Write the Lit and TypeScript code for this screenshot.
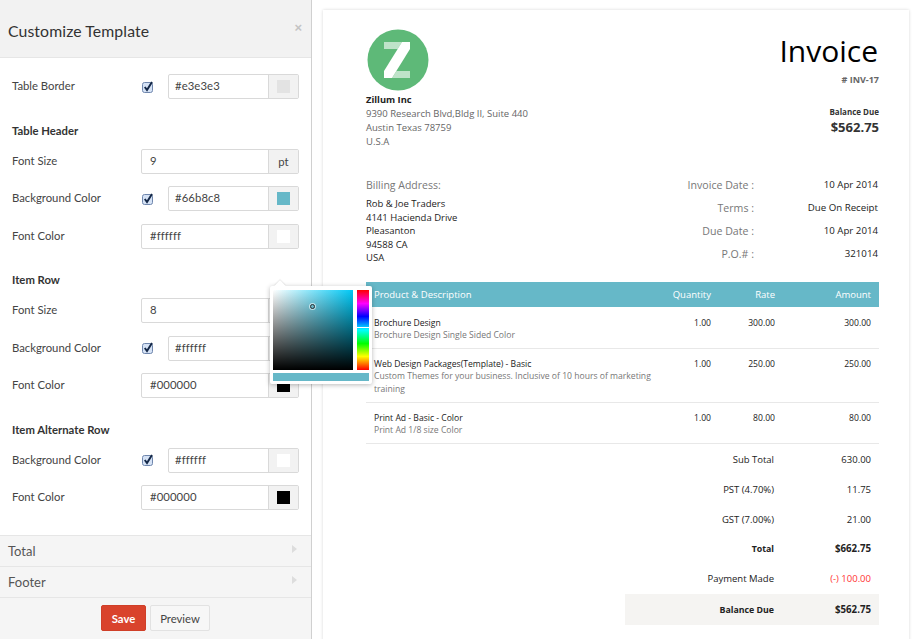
import { LitElement, html, css, svg } from "lit";
import { customElement } from "lit/decorators.js";

type Row = { label: string; check?: boolean; value: string; color?: string; unit?: string; mt: number };

const S1: Row[] = [{ label: "Table Border", check: true, value: "#e3e3e3", color: "#e3e3e3", mt: 0 }];
const S2: Row[] = [
  { label: "Font Size", value: "9", unit: "pt", mt: 10 },
  { label: "Background Color", check: true, value: "#66b8c8", color: "#66b8c8", mt: 12.5 },
  { label: "Font Color", value: "#ffffff", color: "#ffffff", mt: 12.5 },
];
const S3: Row[] = [
  { label: "Font Size", value: "8", unit: "pt", mt: 10 },
  { label: "Background Color", check: true, value: "#ffffff", color: "#ffffff", mt: 12.5 },
  { label: "Font Color", value: "#000000", color: "#000000", mt: 12.5 },
];
const S4: Row[] = [
  { label: "Background Color", check: true, value: "#ffffff", color: "#ffffff", mt: 10 },
  { label: "Font Color", value: "#000000", color: "#000000", mt: 12.5 },
];

const ITEMS = [
  { t: "Brochure Design", d: ["Brochure Design Single Sided Color"], q: "1.00", r: "300.00", a: "300.00", h: 42, p: 10 },
  { t: "Web Design Packages(Template) - Basic", d: ["Custom Themes for your business. Inclusive of 10 hours of marketing", "training"], q: "1.00", r: "250.00", a: "250.00", h: 54, p: 9 },
  { t: "Print Ad - Basic - Color", d: ["Print Ad 1/8 size Color"], q: "1.00", r: "80.00", a: "80.00", h: 41, p: 9 },
];

@customElement("app-root")
export class AppRoot extends LitElement {
  static styles = css`
    :host { display: block; width: 918px; height: 639px; overflow: hidden; background: #fff; position: relative; font-family: "Lato", "Liberation Sans", sans-serif; }
    .page { display: flex; height: 639px; }
    .panel { width: 311px; flex: none; background: #fff; border-right: 1px solid #d0d0d0; display: flex; flex-direction: column; height: 639px; box-sizing: content-box; }
    .phead { height: 58px; background: #f2f2f2; border-bottom: 1px solid #e6e6e6; display: flex; align-items: center; justify-content: space-between; padding: 3px 8px 0 8px; box-sizing: border-box; flex: none; }
    .phead h1 { margin: 0; font-size: 15.8px; font-weight: 400; color: #333; letter-spacing: .1px; }
    .x { color: #c4c4c4; font-size: 13px; font-weight: 700; margin: -5px 1px 0 0; font-family: "Liberation Sans", sans-serif; }
    .body { flex: 1; padding: 16px 12px 0 12px; }
    .row { display: flex; align-items: center; height: 25px; font-size: 11.3px; color: #444; }
    .lbl { width: 129px; flex: none; padding-bottom: 2px; }
    .chk { width: 27px; padding-left: 1px; box-sizing: border-box; flex: none; display: flex; }
    .field { flex: 1; display: flex; height: 25px; border: 1px solid #d9d9d9; border-radius: 2px; box-sizing: border-box; background: #fff; }
    .val { flex: 1; padding-left: 6px; line-height: 22px; font-size: 11.3px; color: #444; letter-spacing: .1px; }
    .val.num { padding-left: 8px; }
    .addon { width: 29px; background: #f2f2f2; border-left: 1px solid #d9d9d9; display: flex; align-items: center; justify-content: center; font-size: 11.3px; color: #444; }
    .sw { width: 13px; height: 13px; }
    h2 { margin: 25.5px 0 0; height: 14px; font-size: 11.3px; font-weight: 700; color: #333; line-height: 12px; }
    .acc { height: 31px; background: #f5f5f5; border-top: 1px solid #e6e6e6; box-sizing: border-box; display: flex; align-items: center; justify-content: space-between; padding: 0 14px 0 8px; font-size: 13px; color: #555; flex: none; }
    .tri { width: 0; height: 0; border-left: 5px solid #ddd; border-top: 4px solid transparent; border-bottom: 4px solid transparent; margin-top: -5px; }
    .foot { height: 42px; border-top: 1px solid #e6e6e6; background: #f5f5f5; display: flex; justify-content: center; gap: 4px; padding-top: 7px; box-sizing: border-box; flex: none; }
    .btn { height: 26px; border-radius: 2px; box-sizing: border-box; font-size: 11.3px; display: flex; align-items: center; justify-content: center; }
    .save { width: 45px; background: #d9432c; color: #fff; font-weight: 700; border: 1px solid #cf3f28; }
    .prev { width: 60px; background: #f7f7f7; color: #444; border: 1px solid #e2e2e2; }

    .stage { flex: 1; padding: 10px 0 0 11px; }
    .sheet { width: 586px; height: 640px; background: #fff; box-shadow: 0 0 3px rgba(0,0,0,.16); box-sizing: border-box; padding: 19px 30px 0 43px; font-family: "Open Sans", "Liberation Sans", sans-serif; color: #222; font-size: 10px; }
    .top { display: flex; justify-content: space-between; height: 145px; }
    .org { font-size: 9.5px; color: #666; }
    .org svg { display: block; margin: 0 0 1px 1px; }
    .org b { color: #222; font-size: 9.3px; font-weight: 700; display: block; line-height: 15px; }
    .org .a { line-height: 14px; }
    .ihead { text-align: right; }
    .ihead .big { font-size: 30px; line-height: 42px; color: #000; font-weight: 400; margin-top: 1px; padding-right: 1px; }
    .ihead .no { font-size: 9px; color: #666; font-weight: 700; margin-top: 2px; line-height: 12px; }
    .ihead .bd { font-size: 8px; font-weight: 700; color: #333; margin-top: 20px; line-height: 12px; }
    .ihead .amt { font-size: 13px; font-weight: 700; color: #333; line-height: 18px; }
    .bill { display: flex; justify-content: space-between; height: 108px; }
    .bl { font-size: 9.5px; color: #222; padding-top: 3px; }
    .bl .t { color: #777; font-size: 10.5px; line-height: 16px; margin-bottom: 4px; }
    .bl div.l { line-height: 13.5px; }
    .meta { display: grid; grid-template-columns: 87px 124px; grid-auto-rows: 23px; width: 212px; padding-top: 3px; box-sizing: border-box; padding-right: 1px; align-self: flex-start; }
    .meta .k { color: #777; text-align: right; font-size: 10.6px; line-height: 16px; }
    .meta .v { color: #222; text-align: right; font-size: 9.7px; line-height: 16px; }
    .thead { background: #66b8c8; color: #fff; height: 25px; display: flex; align-items: center; font-size: 9.5px; }
    .c1 { flex: 1; padding-left: 8px; white-space: nowrap; }
    .c2 { width: 60px; text-align: right; }
    .c3 { width: 64px; text-align: right; }
    .c4 { width: 104px; text-align: right; padding-right: 8px; box-sizing: border-box; }
    .item { display: flex; border-bottom: 1px solid #e8e8e8; box-sizing: border-box; font-size: 8.6px; line-height: 12.3px; color: #222; }
    .item .d { color: #777; }
    .totals { padding-top: 1px; }
    .tot { display: flex; height: 29.7px; align-items: center; font-size: 9.5px; color: #222; }
    .totk { flex: 1; text-align: right; }
    .tot .v { width: 105px; text-align: right; padding-right: 8px; box-sizing: border-box; }
    .tot.b { font-weight: 700; font-size: 9.7px; }
    .tot.b .totk { font-size: 8.8px; }
    .tot .red { color: #f33; }
    .bal { background: #f5f4f2; margin-left: 259px; height: 31px; margin-top: 1px; }

    .pop { position: absolute; left: 270px; top: 286px; width: 102px; height: 98px; background: #fff; box-shadow: 0 1px 5px rgba(0,0,0,.28); border-radius: 2px; }
    .arrow { position: absolute; left: 6px; top: -4px; width: 8px; height: 8px; background: #fff; transform: rotate(45deg); box-shadow: -1px -1px 1px rgba(0,0,0,.08); }
    .sv { position: absolute; left: 3px; top: 4px; width: 80px; height: 80px; background: linear-gradient(to bottom, transparent, #000), linear-gradient(to right, #fff, #00c8f5); }
    .dot { position: absolute; left: 37px; top: 14px; width: 3px; height: 3px; border: 1px solid #333; border-radius: 50%; box-shadow: 0 0 0 1px rgba(255,255,255,.6); }
    .hue { position: absolute; left: 87px; top: 4px; width: 12px; height: 80px; background: linear-gradient(to bottom, #f00 0%, #f0f 17%, #00f 33%, #0ff 50%, #0f0 67%, #ff0 83%, #f00 100%); }
    .hmark { position: absolute; left: 0; right: 0; top: 37px; height: 1px; background: #fff; }
    .cur { position: absolute; left: 3px; top: 87px; width: 96px; height: 8px; background: #66b8c8; }
  `;

  row(r: Row) {
    return html`<div class="row" style="margin-top:${r.mt}px">
      <div class="lbl">${r.label}</div>
      ${r.check ? html`<div class="chk">
        <svg width="12" height="12" viewBox="0 0 12 12"><rect x=".5" y="1.5" width="10" height="10" rx="2" fill="#d5e2f5" stroke="#6f86ad"/><path d="M2.8 6l2.2 3L10 1" fill="none" stroke="#142848" stroke-width="2"/></svg>
      </div>` : null}
      <div class="field">
        <div class="val ${r.check ? "" : "num"}">${r.value}</div>
        <div class="addon">${r.unit ? r.unit : html`<div class="sw" style="background:${r.color}"></div>`}</div>
      </div>
    </div>`;
  }

  logo() {
    return svg`<svg width="62" height="62" viewBox="0 0 62 62">
      <circle cx="31" cy="31" r="30.5" fill="#5eb978"/>
      <path d="M17 13H35L30.6 20H17z" fill="#fff" opacity=".6"/>
      <path d="M29.5 42H43V49H25z" fill="#fff" opacity=".6"/>
      <path d="M35 13H43V20L25 49H17V42z" fill="#fff"/>
    </svg>`;
  }

  render() {
    return html`<div class="page">
      <div class="panel">
        <div class="phead"><h1>Customize Template</h1><span class="x">×</span></div>
        <div class="body">
          ${S1.map((r) => this.row(r))}
          <h2>Table Header</h2>
          ${S2.map((r) => this.row(r))}
          <h2>Item Row</h2>
          ${S3.map((r) => this.row(r))}
          <h2>Item Alternate Row</h2>
          ${S4.map((r) => this.row(r))}
        </div>
        <div class="acc"><span>Total</span><span class="tri"></span></div>
        <div class="acc"><span>Footer</span><span class="tri"></span></div>
        <div class="foot"><div class="btn save">Save</div><div class="btn prev">Preview</div></div>
      </div>
      <div class="stage">
        <div class="sheet">
          <div class="top">
            <div class="org">${this.logo()}<b>Zillum Inc</b><div class="a">9390 Research Blvd,Bldg II, Suite 440</div><div class="a">Austin Texas 78759</div><div class="a">U.S.A</div></div>
            <div class="ihead"><div class="big">Invoice</div><div class="no"># INV-17</div><div class="bd">Balance Due</div><div class="amt">$562.75</div></div>
          </div>
          <div class="bill">
            <div class="bl"><div class="t">Billing Address:</div><div class="l">Rob &amp; Joe Traders</div><div class="l">4141 Hacienda Drive</div><div class="l">Pleasanton</div><div class="l">94588 CA</div><div class="l">USA</div></div>
            <div class="meta">
              <div class="k">Invoice Date :</div><div class="v">10 Apr 2014</div>
              <div class="k">Terms :</div><div class="v">Due On Receipt</div>
              <div class="k">Due Date :</div><div class="v">10 Apr 2014</div>
              <div class="k">P.O.# :</div><div class="v">321014</div>
            </div>
          </div>
          <div class="thead"><div class="c1">Product &amp; Description</div><div class="c2">Quantity</div><div class="c3">Rate</div><div class="c4">Amount</div></div>
          ${ITEMS.map((i) => html`<div class="item" style="height:${i.h}px;padding-top:${i.p}px">
            <div class="c1"><div>${i.t}</div>${i.d.map((d) => html`<div class="d">${d}</div>`)}</div>
            <div class="c2">${i.q}</div><div class="c3">${i.r}</div><div class="c4">${i.a}</div>
          </div>`)}
          <div class="totals">
            <div class="tot"><div class="totk">Sub Total</div><div class="v">630.00</div></div>
            <div class="tot"><div class="totk">PST (4.70%)</div><div class="v">11.75</div></div>
            <div class="tot"><div class="totk">GST (7.00%)</div><div class="v">21.00</div></div>
            <div class="tot b"><div class="totk">Total</div><div class="v">$662.75</div></div>
            <div class="tot"><div class="totk">Payment Made</div><div class="v red">(-) 100.00</div></div>
            <div class="tot b bal"><div class="totk">Balance Due</div><div class="v">$562.75</div></div>
          </div>
        </div>
      </div>
    </div>
    <div class="pop"><div class="arrow"></div><div class="sv"><div class="dot"></div></div><div class="hue"><div class="hmark"></div></div><div class="cur"></div></div>`;
  }
}
